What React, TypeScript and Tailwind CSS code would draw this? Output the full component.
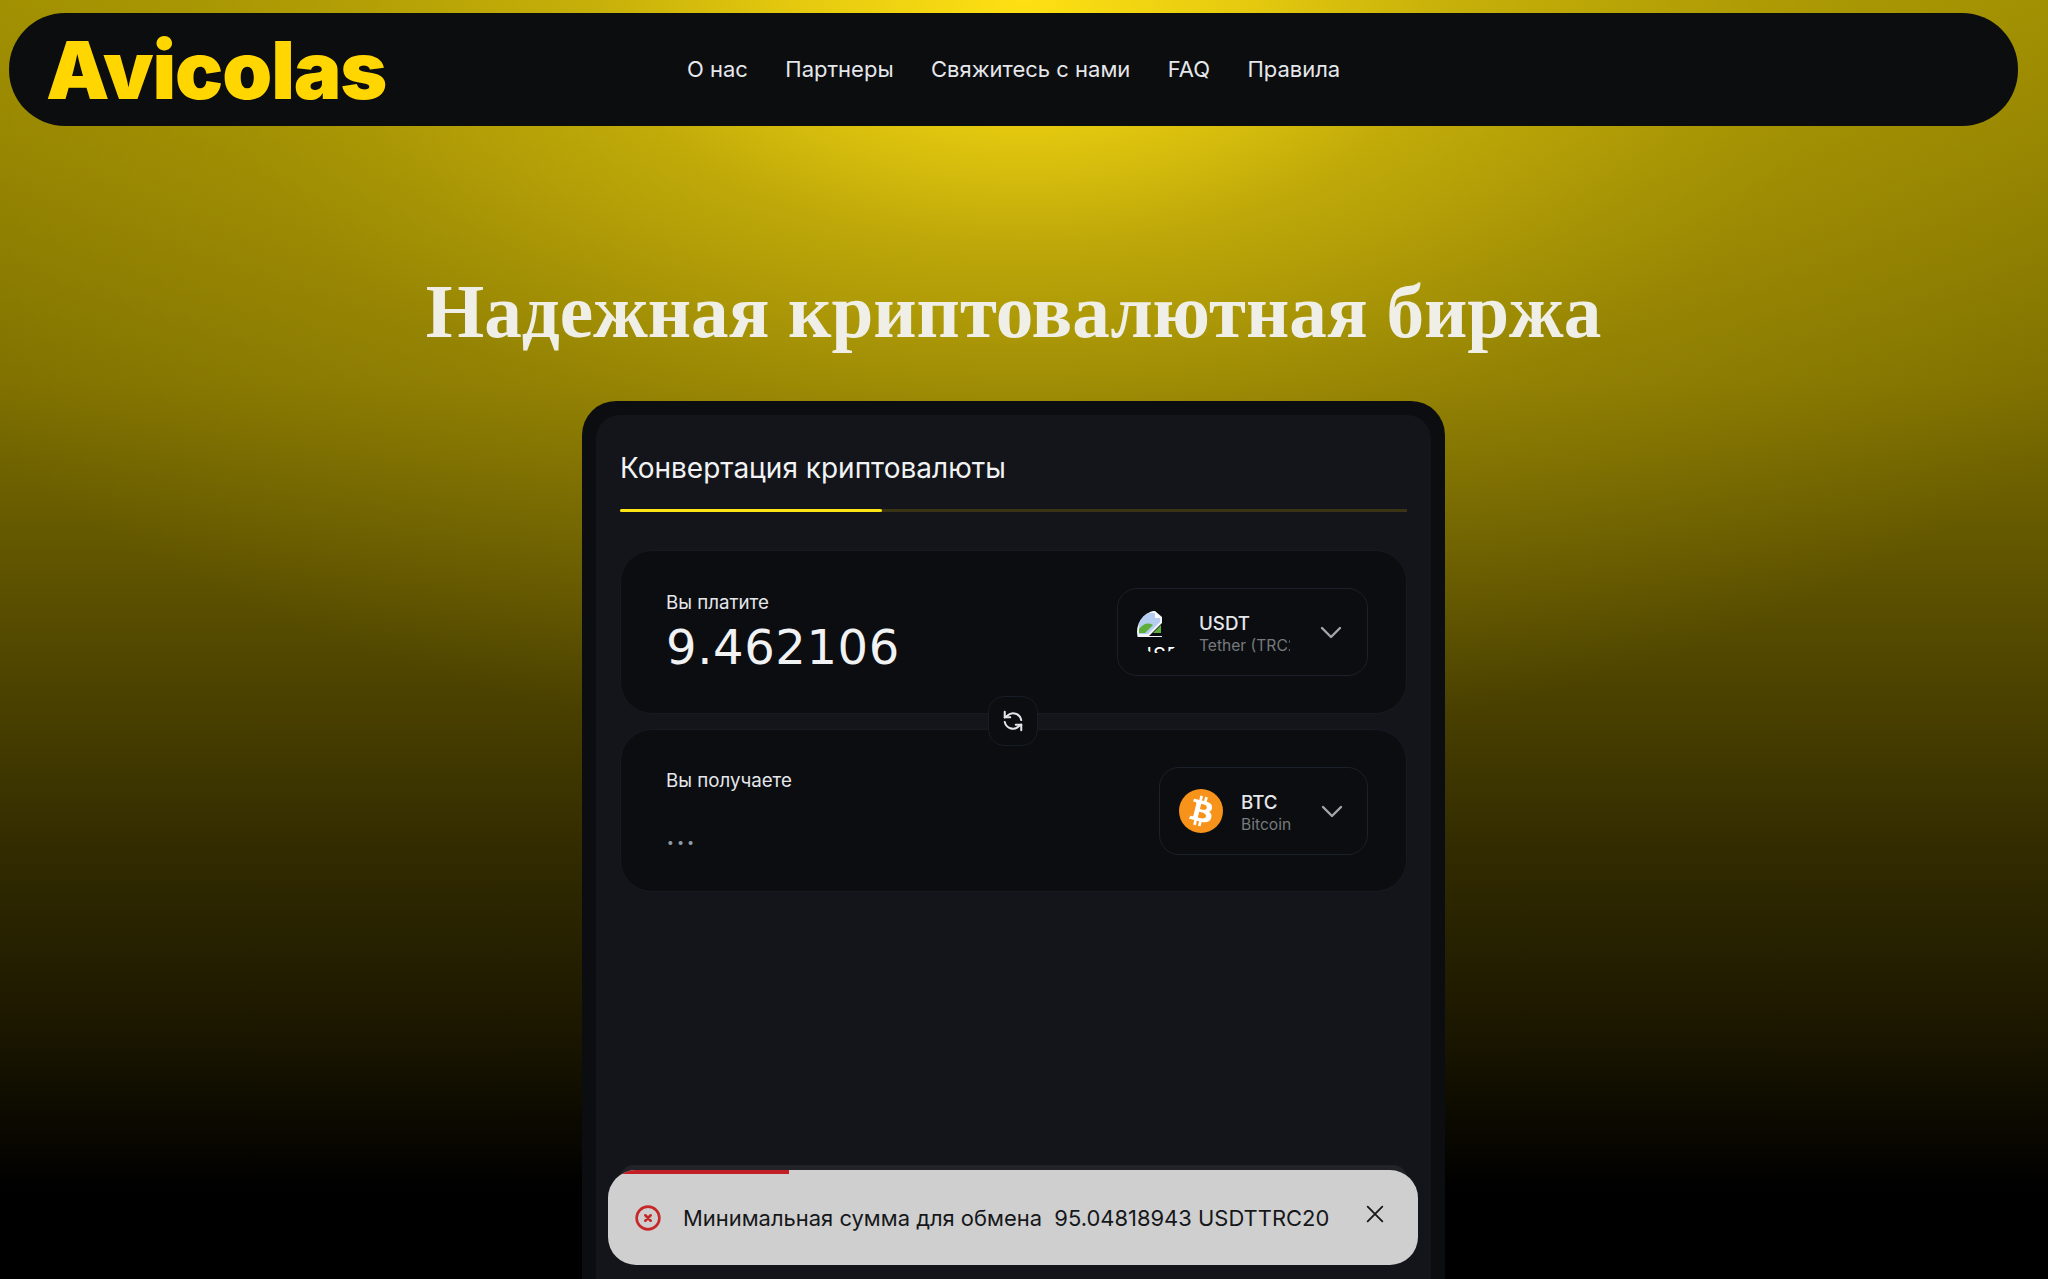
const bg = "bg-[radial-gradient(ellipse_1300px_760px_at_50%_0%,rgba(255,224,20,1)_0%,rgba(255,224,20,0.75)_17%,rgba(255,224,20,0.45)_33%,rgba(255,224,20,0.25)_53%,rgba(255,224,20,0.17)_63%,rgba(255,224,20,0)_100%),linear-gradient(to_bottom,#988800_0%,#7c6e00_30%,#5a4f00_47%,#332c00_66%,#1c1800_80%,#000000_93%)]";

function BrokenImage() {
  return (
    <div className="relative h-11 w-11 shrink-0 overflow-hidden rounded-full">
      <svg viewBox="0 0 26 26" className="absolute left-0 top-[1px] h-[26px] w-[26px]">
        <path d="M0 24V14C0 6 6 0 14 0h4l7 6v6L12 25H0z" fill="#f1f4f8" />
        <path d="M2 22V14C2 8 7 2 14 2h3l6 5v4L11 23H2z" fill="#b5cdf0" />
        <path d="M18 1v6h6z" fill="#ffffff" />
        <path d="M2 22v-4c4-5 9-7 14-4l-8 8H2z" fill="#5dae3a" />
        <path d="M19 19l5-5v8h-8z" fill="#5dae3a" />
        <path d="M0 25h25v1H0z" fill="#f1f4f8" />
      </svg>
      <span className="absolute left-0 top-[33px] h-[10px] overflow-hidden text-[20px] leading-[24px] tracking-[1px] text-white">
        USDT
      </span>
    </div>
  );
}

function BitcoinIcon() {
  return (
    <svg viewBox="0 0 32 32" className="h-11 w-11 shrink-0">
      <circle cx="16" cy="16" r="16" fill="#F7931A" />
      <g transform="translate(16 16) scale(1.12) translate(-16 -16)">
        <path
          fill="#FFF"
          d="M23.189 14.02c.314-2.096-1.283-3.223-3.465-3.975l.708-2.84-1.728-.43-.69 2.765c-.454-.114-.92-.22-1.385-.326l.695-2.783L15.596 6l-.708 2.839c-.376-.086-.746-.17-1.104-.26l.002-.009-2.384-.595-.46 1.846s1.283.294 1.256.312c.7.175.826.638.805 1.006l-.806 3.235c.048.012.11.03.18.057l-.183-.045-1.13 4.532c-.086.212-.303.531-.793.41.018.025-1.256-.313-1.256-.313l-.858 1.978 2.25.561c.418.105.828.215 1.231.318l-.715 2.872 1.727.43.708-2.84c.472.127.93.245 1.378.357l-.706 2.828 1.728.43.715-2.866c2.948.558 5.164.333 6.097-2.333.752-2.146-.037-3.385-1.588-4.192 1.13-.26 1.98-1.003 2.207-2.538zm-3.95 5.538c-.533 2.147-4.148.986-5.32.695l.95-3.805c1.172.293 4.929.872 4.37 3.11zm.535-5.569c-.487 1.953-3.495.96-4.47.717l.86-3.45c.975.243 4.118.696 3.61 2.733z"
        />
      </g>
    </svg>
  );
}

function Chevron() {
  return (
    <svg viewBox="0 0 24 24" className="ml-[29px] h-6 w-6 shrink-0" fill="none" stroke="#a3a5a8" strokeWidth="2.4" strokeLinecap="round" strokeLinejoin="round">
      <path d="M3 8l9 9 9-9" />
    </svg>
  );
}

function Selector({ icon, code, name, width, textWidth }: { icon: React.ReactNode; code: string; name: string; width: string; textWidth: string }) {
  return (
    <div className={`flex h-[88px] items-center rounded-[20px] border border-[#1a212b] pl-[19px] pr-[22px] ${width}`}>
      {icon}
      <div className={`ml-[18px] overflow-hidden whitespace-nowrap pt-[6px] ${textWidth}`}>
        <div className="text-[18.72px] leading-[22px] font-medium text-[#e5e7eb]">{code}</div>
        <div className="text-[15.6px] leading-[22px] text-[#77797c]">{name}</div>
      </div>
      <Chevron />
    </div>
  );
}

export default function App() {
  return (
    <div className={`relative h-[1279px] overflow-hidden ${bg} [font-family:Inter,sans-serif]`}>
      <div className="w-[2027px]">
        <header className="mx-[9px] pt-[13px]">
          <div className="flex h-[113px] items-center rounded-[56px] bg-[#0b0d0f] pl-[37px]">
            <div className="w-[641px] text-[80px] leading-none font-black tracking-[-1.1px] text-[#ffd600] [font-family:Inter,sans-serif]">Avicolas</div>
            <nav className="flex gap-[37.4px] text-[22px] text-[#e5e7eb]">
              <span>О нас</span>
              <span>Партнеры</span>
              <span>Свяжитесь с нами</span>
              <span>FAQ</span>
              <span>Правила</span>
            </nav>
          </div>
        </header>

        <h1 className="mt-[141px] text-center text-[75.2px] leading-[90px] font-bold text-[#efefe8] [font-family:'Liberation_Serif',serif]">
          Надежная криптовалютная биржа
        </h1>

        <main className="mx-auto mt-[44px] h-[1000px] w-[863px] rounded-[34px] bg-[#0b0d10] p-[14px]">
          <div className="h-full rounded-[24px] bg-[#13151a] px-[24px] pt-[33px]">
            <div className="text-[28px] leading-[40px] text-[#f1f2f4]">Конвертация криптовалюты</div>
            <div className="mt-[21px] h-[3px] bg-[#3a3414]">
              <div className="h-full w-[262px] rounded-full bg-[#fde414]" />
            </div>

            <section className="relative mt-[38px] flex h-[164px] items-center justify-between rounded-[32px] border border-[#161a21] bg-[#0b0d10] pl-[45px] pr-[38px]">
              <div className="pt-[2px]">
                <div className="text-[18.72px] leading-[24px] text-[#e5e7eb]">Вы платите</div>
                <div className="mt-[3px] text-[48px] leading-[58px] tracking-[0.6px] text-[#f1f2f4] [font-family:'DejaVu_Sans',sans-serif]">9.462106</div>
              </div>
              <Selector icon={<BrokenImage />} code="USDT" name="Tether (TRC20)" width="w-[251px]" textWidth="w-[91px]" />
              <div className="absolute bottom-[-33px] left-[calc(50%-1px)] z-10 flex h-[50px] w-[50px] -translate-x-1/2 items-center justify-center rounded-[16px] border border-[#161d27] bg-[#0b0d10]">
                <svg viewBox="0 0 24 24" className="h-[22px] w-[22px]" fill="none" stroke="#e5e7eb" strokeWidth="2.2" strokeLinecap="round" strokeLinejoin="round">
                  <path d="M3 2v6h6" />
                  <path d="M21 22v-6h-6" />
                  <path d="M21 11a9 9 0 0 0-15-5L3 8" />
                  <path d="M3 13a9 9 0 0 0 15 5l3-2" />
                </svg>
              </div>
            </section>

            <section className="mt-[15px] flex h-[163px] items-center justify-between rounded-[32px] border border-[#161a21] bg-[#0b0d10] pl-[45px] pr-[38px]">
              <div className="self-start pt-[39px]">
                <div className="text-[18.72px] leading-[24px] text-[#e5e7eb]">Вы получаете</div>
                <div className="mt-[21px] text-[30px] leading-[40px] tracking-[1.5px] text-[#8f98a3]">...</div>
              </div>
              <Selector icon={<BitcoinIcon />} code="BTC" name="Bitcoin" width="w-[209px]" textWidth="w-[50px]" />
            </section>
          </div>
        </main>
      </div>

      <div className="absolute left-[620px] top-[1165px] h-[40px] w-[787px] rounded-t-[14px] bg-[#212328]" />
      <div className="absolute left-[608px] top-[1170px] flex h-[95px] w-[810px] items-center overflow-hidden rounded-[28px] bg-[#cfcfcf] pl-[27px] pr-[32px]">
        <div className="absolute left-0 top-0 h-[4px] w-[181px] bg-[#c21f26]" />
        <svg viewBox="0 0 24 24" className="h-[26px] w-[26px] shrink-0" fill="none" stroke="#c62828" strokeWidth="2.4" strokeLinecap="round">
          <circle cx="12" cy="12" r="10.5" />
          <path d="M9.5 9.5l5 5M14.5 9.5l-5 5" />
        </svg>
        <span className="ml-[22px] whitespace-pre pt-[2px] text-[21.95px] text-[#15171a]">Минимальная сумма для обмена  95.04818943 USDTTRC20</span>
        <svg viewBox="0 0 24 24" className="mb-[8px] ml-auto h-[22px] w-[22px] shrink-0" fill="none" stroke="#15171a" strokeWidth="2" strokeLinecap="round">
          <path d="M4 4l16 16M20 4L4 20" />
        </svg>
      </div>
    </div>
  );
}
